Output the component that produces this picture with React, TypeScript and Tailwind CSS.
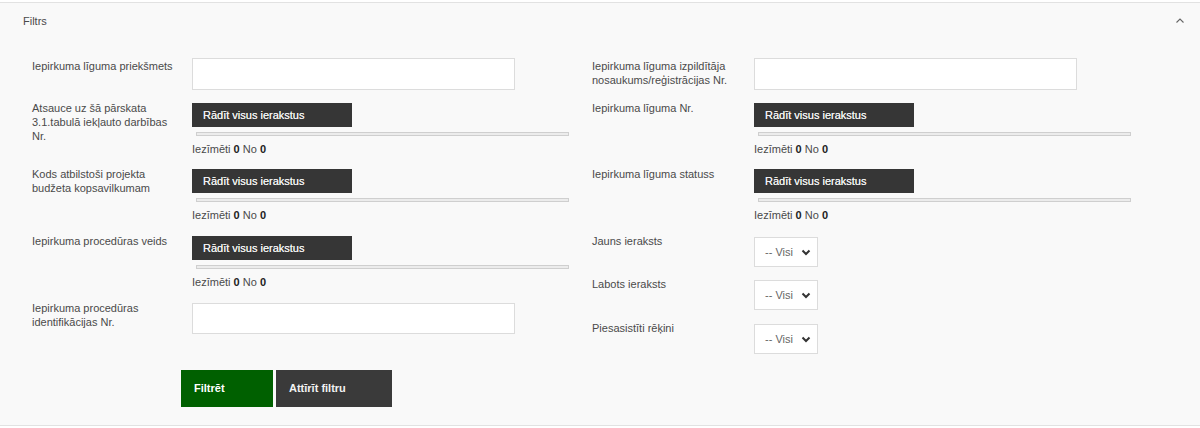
import React from "react";

const font = { fontFamily: '"Liberation Sans", Arial, sans-serif' };

function Label({ children, className = "" }: { children: React.ReactNode; className?: string }) {
  return (
    <div className={"w-[160px] shrink-0 whitespace-nowrap text-[11px] leading-[14px] text-[#4a4a4a] " + className}>
      {children}
    </div>
  );
}

function TextInput({ className = "" }: { className?: string }) {
  return <div className={"w-[323px] bg-white border border-[#dcdcdc] " + className} />;
}

function Multi() {
  return (
    <div className="flex flex-col">
      <div className="w-[160px] h-[24px] bg-[#363636] text-[#f0f0f0] text-[11px] leading-[24px] pl-[11px] [text-shadow:0_0_0.4px_#f0f0f0]">
        Rādīt visus ierakstus
      </div>
      <div className="ml-[4px] mt-[5px] w-[373px] h-[4px] border border-[#cfcfcf] bg-[#ececec]" />
      <div className="mt-[5px] h-[16px] text-[11px] leading-[16px] text-[#4a4a4a]">
        Iezīmēti <b className="font-bold text-[#222]">0</b> No <b className="font-bold text-[#222]">0</b>
      </div>
    </div>
  );
}

function Select() {
  return (
    <div className="w-[64px] h-[30px] bg-white border border-[#dcdcdc] flex items-center justify-between pl-[10px] pr-[6px] text-[11px] text-[#666]">
      <span>-- Visi</span>
      <svg width="10" height="8" viewBox="0 0 10 8">
        <path d="M1.5 2.5 L5 6 L8.5 2.5" fill="none" stroke="#333" strokeWidth="2" />
      </svg>
    </div>
  );
}

export default function App() {
  return (
    <div style={font} className="w-[1200px] h-[428px] bg-white pt-[2px]">
      <div className="h-[424px] bg-[#f9f9f9] border-t border-b border-[#e2e2e2] flex flex-col">
        <div className="h-[55px] flex justify-between pl-[23px] pr-[14px] pt-[10px]">
          <div className="text-[11px] leading-[16px] text-[#4a4a4a]">Filtrs</div>
          <svg width="12" height="10" viewBox="0 0 12 10" className="mt-[3px]">
            <path d="M2.5 6.5 L6 3 L9.5 6.5" fill="none" stroke="#666" strokeWidth="1.1" />
          </svg>
        </div>
        <div className="grid grid-cols-[560px_560px] pl-[32px]">
          {/* left column */}
          <div className="flex flex-col">
            <div className="flex mb-[13px]">
              <Label className="pt-[1px]">Iepirkuma līguma priekšmets</Label>
              <TextInput className="h-[32px]" />
            </div>
            <div className="flex mb-[12px]">
              <Label className="-mt-[2px]">
                Atsauce uz šā pārskata
                <br />
                3.1.tabulā iekļauto darbības
                <br />
                Nr.
              </Label>
              <Multi />
            </div>
            <div className="flex mb-[13px]">
              <Label className="-mt-[2px]">
                Kods atbilstoši projekta
                <br />
                budžeta kopsavilkumam
              </Label>
              <Multi />
            </div>
            <div className="flex mb-[13px]">
              <Label className="-mt-[2px]">Iepirkuma procedūras veids</Label>
              <Multi />
            </div>
            <div className="flex">
              <Label className="-mt-[2px]">
                Iepirkuma procedūras
                <br />
                identifikācijas Nr.
              </Label>
              <TextInput className="h-[31px]" />
            </div>
            <div className="flex gap-[3px] ml-[149px] mt-[36px]">
              <div className="w-[92px] h-[37px] bg-[#006000] text-white text-[11px] font-bold leading-[37px] pl-[13px]">
                Filtrēt
              </div>
              <div className="w-[116px] h-[37px] bg-[#3a3a3a] text-[#f2f2f2] text-[11px] font-bold leading-[37px] pl-[13px]">
                Attīrīt filtru
              </div>
            </div>
          </div>
          {/* right column */}
          <div className="flex flex-col">
            <div className="flex mb-[13px]">
              <Label className="w-[162px] pt-[1px]">
                Iepirkuma līguma izpildītāja
                <br />
                nosaukums/reģistrācijas Nr.
              </Label>
              <TextInput className="h-[32px]" />
            </div>
            <div className="flex mb-[12px]">
              <Label className="w-[162px] -mt-[2px]">Iepirkuma līguma Nr.</Label>
              <Multi />
            </div>
            <div className="flex mb-[14px]">
              <Label className="w-[162px] -mt-[2px]">Iepirkuma līguma statuss</Label>
              <Multi />
            </div>
            <div className="flex mb-[13px]">
              <Label className="w-[162px] -mt-[3px]">Jauns ieraksts</Label>
              <Select />
            </div>
            <div className="flex mb-[14px]">
              <Label className="w-[162px] -mt-[3px]">Labots ieraksts</Label>
              <Select />
            </div>
            <div className="flex">
              <Label className="w-[162px] -mt-[3px]">Piesasistīti rēķini</Label>
              <Select />
            </div>
          </div>
        </div>
      </div>
    </div>
  );
}
